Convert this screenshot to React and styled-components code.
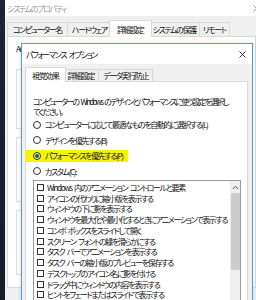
import React from "react";
import styled, { createGlobalStyle } from "styled-components";

const GlobalStyle = createGlobalStyle`
  html, body { margin: 0; padding: 0; }
  body { background: #1b2232; font-family: "Noto Sans CJK JP", "Noto Sans", sans-serif; }
  #root { width: 256px; height: 300px; }
`;

const Desktop = styled.div`
  position: relative;
  display: flex;
  width: 256px;
  height: 300px;
  overflow: hidden;
  background: #1b2232;
  font-size: 8px;
  letter-spacing: -1.35px;
  word-spacing: 2px;
  font-feature-settings: "palt";
  color: #111;
`;

const Strip = styled.div`
  flex: none;
  width: 5px;
  background: linear-gradient(#1d2436, #161c2a);
`;

const BackWindow = styled.div`
  flex: 1;
  min-width: 0;
  display: flex;
  flex-direction: column;
  background: #f0f0f0;
`;

const BackTitleBar = styled.div`
  flex: none;
  height: 16px;
  display: flex;
  align-items: center;
  justify-content: space-between;
  padding-left: 2px;
  background: #fff;
  color: #9a9a9a;
  white-space: nowrap;
`;

const CloseIcon = ({ size = 7, color = "#333", className }) => (
  <svg className={className} width={size} height={size} viewBox="0 0 7 7">
    <path d="M0.5 0.5 L6.5 6.5 M6.5 0.5 L0.5 6.5" stroke={color} strokeWidth="0.9" fill="none" />
  </svg>
);

const BackClose = styled(CloseIcon)`
  flex: none;
  margin-right: -4px;
`;

const TabRow = styled.div`
  flex: none;
  display: flex;
  align-items: flex-end;
  padding: ${(p) => p.$pad};
  white-space: nowrap;
`;

const Tab = styled.div`
  flex: none;
  box-sizing: border-box;
  height: ${(p) => (p.$active ? p.$h + 2 : p.$h)}px;
  display: flex;
  align-items: center;
  justify-content: center;
  padding: 0 ${(p) => (p.$active ? p.$px + 2 : p.$px)}px;
  margin-right: ${(p) => (p.$active ? -2 : 0)}px;
  margin-left: ${(p) => (p.$first ? 0 : p.$active ? -3 : -1)}px;
  background: ${(p) => (p.$active ? "#fff" : "#f0f0f0")};
  border: 1px solid #d9d9d9;
  border-bottom: ${(p) => (p.$active ? "none" : "1px solid #d9d9d9")};
  position: relative;
  z-index: ${(p) => (p.$active ? 2 : 1)};
  color: #111;
`;

const BackPanel = styled.div`
  flex: 1;
  margin: -1px 0 12px 2px;
  background: #fff;
  border: 1px solid #d9d9d9;
  padding: 7px 8px;
  display: flex;
  flex-direction: column;
  gap: 3px;
  white-space: nowrap;
`;

const Note = styled.div`
  line-height: 10px;
  margin-bottom: 7px;
`;

const Group = styled.fieldset`
  margin: 0;
  height: ${(p) => p.$h}px;
  box-sizing: border-box;
  border: 1px solid #dcdcdc;
  padding: 0 6px;
  legend {
    padding: 0 2px;
    line-height: 10px;
  }
`;

const Dialog = styled.div`
  position: absolute;
  left: 21px;
  top: 43px;
  width: 232px;
  height: 280px;
  box-sizing: border-box;
  border: 1px solid #5a9ad8;
  background: #f0f0f0;
  display: flex;
  flex-direction: column;
  box-shadow: 0 0 4px rgba(0, 0, 0, 0.15);
`;

const DialogTitle = styled.div`
  flex: none;
  height: 20px;
  display: flex;
  align-items: center;
  justify-content: space-between;
  padding: 0 6px 0 4px;
  background: #fff;
  color: #111;
`;

const DialogBody = styled.div`
  flex: 1;
  display: flex;
  flex-direction: column;
  padding: 3px 4px 0 3px;
  min-height: 0;
`;

const Page = styled.div`
  flex: 1;
  margin-top: -1px;
  background: #fff;
  border: 1px solid #d9d9d9;
  padding: 15px 6px 0 7px;
  display: flex;
  flex-direction: column;
  min-height: 0;
`;

const Intro = styled.div`
  line-height: 10px;
  white-space: nowrap;
  letter-spacing: -1.75px;
`;

const RadioRow = styled.div`
  height: 15.5px;
  display: flex;
  align-items: center;
  white-space: nowrap;
`;

const RadioLabel = styled.span`
  display: inline-flex;
  align-items: center;
  gap: 4px;
  height: 12px;
  margin-left: ${(p) => (p.$mark ? -8 : 0)}px;
  padding: 0 ${(p) => (p.$mark ? 5 : 0)}px 0 ${(p) => (p.$mark ? 8 : 0)}px;
  background: ${(p) => (p.$mark ? "#f6f400" : "transparent")};
`;

const RadioDot = styled.span`
  flex: none;
  box-sizing: border-box;
  width: 8px;
  height: 8px;
  border-radius: 50%;
  border: 1px solid #333;
  background: ${(p) => (p.$mark ? "#f6f6c0" : "#fff")};
  display: flex;
  align-items: center;
  justify-content: center;
  &::after {
    content: "";
    width: 4px;
    height: 4px;
    border-radius: 50%;
    background: ${(p) => (p.$on ? "#1d6a22" : "transparent")};
  }
`;

const ListBox = styled.div`
  flex: 1;
  margin-top: 1px;
  border: 1px solid #9a9a9a;
  display: flex;
  min-height: 0;
`;

const List = styled.div`
  flex: 1;
  min-width: 0;
  padding: 1px 0 0 3px;
  overflow: hidden;
`;

const CheckRow = styled.div`
  height: 10.75px;
  display: flex;
  align-items: center;
  gap: 3px;
  white-space: nowrap;
`;

const Box = styled.span`
  flex: none;
  box-sizing: border-box;
  width: 7px;
  height: 7px;
  border: 1px solid #333;
  background: #fff;
`;

const ScrollBar = styled.div`
  flex: none;
  width: 10px;
  background: #f0f0f0;
  display: flex;
  flex-direction: column;
  align-items: center;
`;

const ScrollArrow = styled.div`
  height: 12px;
  display: flex;
  align-items: center;
  justify-content: center;
`;

const Thumb = styled.div`
  width: 9px;
  height: 77px;
  background: #cdcdcd;
`;

const options = [
  "Windows 内のアニメーション コントロールと要素",
  "アイコンの代わりに縮小版を表示する",
  "ウィンドウの下に影を表示する",
  "ウィンドウを最大化や最小化するときにアニメーションで表示する",
  "コンボ ボックスをスライドして開く",
  "スクリーン フォントの縁を滑らかにする",
  "タスク バーでアニメーションを表示する",
  "タスク バーの縮小版のプレビューを保存する",
  "デスクトップのアイコン名に影を付ける",
  "ドラッグ中にウィンドウの内容を表示する",
  "ヒントをフェードまたはスライドで表示する",
];

const radios = [
  { label: "コンピューターに応じて最適なものを自動的に選択する(L)" },
  { label: "デザインを優先する(B)" },
  { label: "パフォーマンスを優先する(P)", on: true, mark: true },
  { label: "カスタム(C):" },
];

export default function App() {
  return (
    <>
      <GlobalStyle />
      <Desktop>
        <Strip />
        <BackWindow>
          <BackTitleBar>
            <span>システムのプロパティ</span>
            <BackClose color="#999" />
          </BackTitleBar>
          <TabRow $pad="4px 0 0 2px">
            <Tab $h={15} $px={5} $first>コンピューター名</Tab>
            <Tab $h={15} $px={4}>ハードウェア</Tab>
            <Tab $h={15} $px={5} $active>詳細設定</Tab>
            <Tab $h={15} $px={3}>システムの保護</Tab>
            <Tab $h={15} $px={3}>リモート</Tab>
          </TabRow>
          <BackPanel>
            <Note>Administrator としてログオンしない場合は、これらのほとんどは変更できません。</Note>
            <Group $h={65}>
              <legend>パフォーマンス</legend>
            </Group>
            <Group $h={70}>
              <legend>ユーザー プロファイル</legend>
            </Group>
            <Group $h={70}>
              <legend>起動と回復</legend>
            </Group>
          </BackPanel>
        </BackWindow>

        <Dialog>
          <DialogTitle>
            <span>パフォーマンス オプション</span>
            <CloseIcon color="#222" />
          </DialogTitle>
          <DialogBody>
            <TabRow $pad="0">
              <Tab $h={13} $px={4} $active $first>視覚効果</Tab>
              <Tab $h={13} $px={4}>詳細設定</Tab>
              <Tab $h={13} $px={4}>データ実行防止</Tab>
            </TabRow>
            <Page>
              <Intro>
                コンピューターの Windows のデザインとパフォーマンスに使う設定を選択し
                <br />
                てください。
              </Intro>
              <div>
                {radios.map((r) => (
                  <RadioRow key={r.label}>
                    <RadioLabel $mark={r.mark}>
                      <RadioDot $on={r.on} $mark={r.mark} />
                      {r.label}
                    </RadioLabel>
                  </RadioRow>
                ))}
              </div>
              <ListBox>
                <List>
                  {options.map((o) => (
                    <CheckRow key={o}>
                      <Box />
                      {o}
                    </CheckRow>
                  ))}
                </List>
                <ScrollBar>
                  <ScrollArrow>
                    <svg width="7" height="5" viewBox="0 0 7 5">
                      <path d="M0.8 4 L3.5 1.2 L6.2 4" stroke="#555" strokeWidth="1" fill="none" />
                    </svg>
                  </ScrollArrow>
                  <Thumb />
                </ScrollBar>
              </ListBox>
            </Page>
          </DialogBody>
        </Dialog>
      </Desktop>
    </>
  );
}
